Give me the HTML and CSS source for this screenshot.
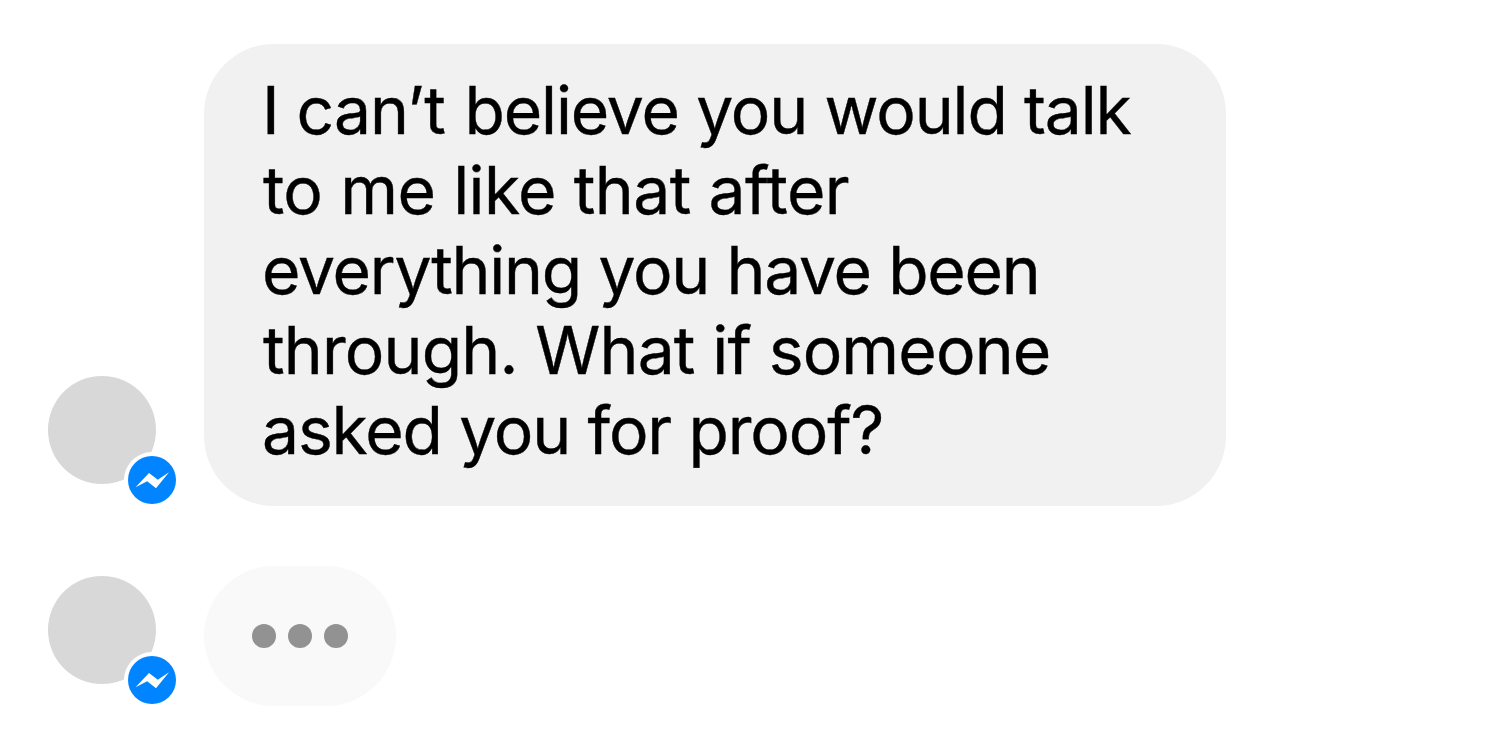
FILE: index.html
```html
<!DOCTYPE html>
<html lang="en">
<head>
    <meta charset="UTF-8">
    <meta name="viewport" content="width=device-width, initial-scale=1.0">
    <title>Messenger</title>
    <link rel="stylesheet" href="styles.css">
</head>
<body>
    <div class="chat">
        <div class="message-row">
            <div class="avatar">
                <svg class="badge" viewBox="0 0 56 56">
                    <circle cx="28" cy="28" r="28" fill="#fff"/>
                    <circle cx="28" cy="28" r="24" fill="#0084ff"/>
                    <path d="M11.6 35.2 L25 21 L33.8 27.8 L45 20.2 L32 36.2 L23.2 29.2 Z" fill="#fff"/>
                </svg>
            </div>
            <div class="bubble">
                <span class="line line-1">I can’t <span class="rest">believe you would talk</span></span>
                <span class="line line-2">to me like that after</span>
                <span class="line line-3">everything you have been</span>
                <span class="line line-4">through. What if someone</span>
                <span class="line line-5">asked you for proof?</span>
            </div>
        </div>

        <div class="message-row">
            <div class="avatar">
                <svg class="badge" viewBox="0 0 56 56">
                    <circle cx="28" cy="28" r="28" fill="#fff"/>
                    <circle cx="28" cy="28" r="24" fill="#0084ff"/>
                    <path d="M11.6 35.2 L25 21 L33.8 27.8 L45 20.2 L32 36.2 L23.2 29.2 Z" fill="#fff"/>
                </svg>
            </div>
            <div class="bubble typing">
                <span class="dot"></span>
                <span class="dot"></span>
                <span class="dot"></span>
            </div>
        </div>
    </div>
</body>
</html>
```
FILE: styles.css
```css
body {
    margin: 0;
    background-color: #fff;
    font-family: Inter, "Liberation Sans", sans-serif;
}

.chat {
    display: flex;
    flex-direction: column;
    gap: 60px;
    padding: 44px 48px 38px;
}

.message-row {
    display: flex;
    align-items: flex-end;
    gap: 48px;
}

.avatar {
    position: relative;
    width: 108px;
    height: 108px;
    margin-bottom: 22px;
    border-radius: 50%;
    background-color: #d8d8d8;
}

.badge {
    position: absolute;
    left: 76px;
    top: 76px;
    width: 56px;
    height: 56px;
}

.bubble {
    box-sizing: border-box;
    width: 1022px;
    height: 462px;
    padding: 26px 59px;
    border-radius: 70px;
    background-color: #f1f1f1;
    color: #000;
    font-size: 66px;
    line-height: 80px;
}

.line {
    display: block;
    white-space: nowrap;
    font-feature-settings: "calt" 0;
    -webkit-text-stroke: 0.4px #000;
}

.line-1 {
    margin-left: -1px;
    letter-spacing: -0.9px;
}

.rest {
    margin-left: 2px;
    letter-spacing: -1.15px;
}

.line-2 {
    letter-spacing: -0.62px;
}

.line-3 {
    margin-left: -1px;
    letter-spacing: -1.24px;
}

.line-4 {
    letter-spacing: -0.86px;
}

.line-5 {
    margin-left: -1px;
    letter-spacing: -1.15px;
}

.typing {
    display: flex;
    align-items: center;
    justify-content: center;
    gap: 12px;
    width: 192px;
    height: 140px;
    padding: 0;
    background-color: #f9f9f9;
}

.dot {
    width: 24px;
    height: 24px;
    border-radius: 50%;
    background-color: #929292;
}
```
